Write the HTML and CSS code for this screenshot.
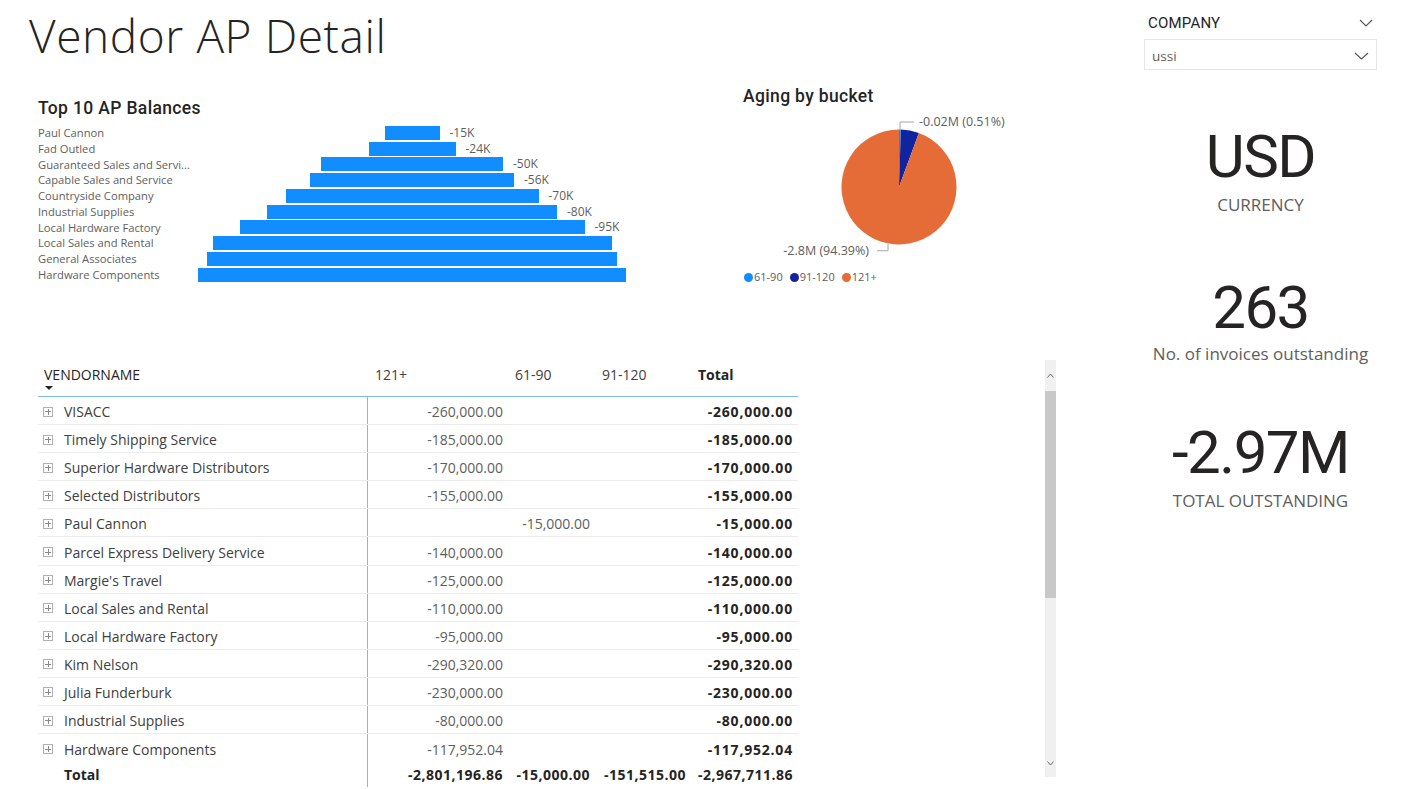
FILE: index.html
```html
<!DOCTYPE html>
<html lang="en">
<head>
<meta charset="utf-8">
<title>Vendor AP Detail</title>
<link rel="stylesheet" href="styles.css">
</head>
<body>
<div class="page">
  <main class="main">
    <h1 class="title">Vendor AP Detail</h1>
    <section class="charts">
      <div class="funnel">
        <h2 class="visual-title">Top 10 AP Balances</h2>
        <div class="funnel-rows">
          <div class="f-row"><span class="f-label">Paul Cannon</span><div class="f-track"><div class="f-bar" style="width:55px"><span class="f-val">-15K</span></div></div></div>
          <div class="f-row"><span class="f-label">Fad Outled</span><div class="f-track"><div class="f-bar" style="width:87px"><span class="f-val">-24K</span></div></div></div>
          <div class="f-row"><span class="f-label">Guaranteed Sales and Servi...</span><div class="f-track"><div class="f-bar" style="width:182px"><span class="f-val">-50K</span></div></div></div>
          <div class="f-row"><span class="f-label">Capable Sales and Service</span><div class="f-track"><div class="f-bar" style="width:204px"><span class="f-val">-56K</span></div></div></div>
          <div class="f-row"><span class="f-label">Countryside Company</span><div class="f-track"><div class="f-bar" style="width:253px"><span class="f-val">-70K</span></div></div></div>
          <div class="f-row"><span class="f-label">Industrial Supplies</span><div class="f-track"><div class="f-bar" style="width:290px"><span class="f-val">-80K</span></div></div></div>
          <div class="f-row"><span class="f-label">Local Hardware Factory</span><div class="f-track"><div class="f-bar" style="width:345px"><span class="f-val">-95K</span></div></div></div>
          <div class="f-row"><span class="f-label">Local Sales and Rental</span><div class="f-track"><div class="f-bar" style="width:399px"></div></div></div>
          <div class="f-row"><span class="f-label">General Associates</span><div class="f-track"><div class="f-bar" style="width:410px"></div></div></div>
          <div class="f-row"><span class="f-label">Hardware Components</span><div class="f-track"><div class="f-bar" style="width:428px"></div></div></div>
        </div>
      </div>
      <div class="pie">
        <h2 class="visual-title">Aging by bucket</h2>
        <svg class="pie-svg" viewBox="0 0 280 152" xmlns="http://www.w3.org/2000/svg">
          <path d="M156 77 L156 19.5 A57.5 57.5 0 0 1 157.85 19.53 Z" fill="#118DFF"/>
          <path d="M156 77 L157.85 19.53 A57.5 57.5 0 0 1 175.88 23.04 Z" fill="#12239E"/>
          <path d="M156 77 L175.88 23.04 A57.5 57.5 0 1 1 156 19.5 Z" fill="#E66C37"/>
          <path d="M157 19.5 V12 H171" fill="none" stroke="#a6a6a6" stroke-width="1"/>
          <path d="M134 140.7 H145 V133.5" fill="none" stroke="#a6a6a6" stroke-width="1"/>
          <text class="pie-lbl" x="176" y="16">-0.02M (0.51%)</text>
          <text class="pie-lbl" x="126" y="145" text-anchor="end">-2.8M (94.39%)</text>
        </svg>
        <div class="legend">
          <span class="lg-item"><span class="dot d1"></span>61-90</span>
          <span class="lg-item"><span class="dot d2"></span>91-120</span>
          <span class="lg-item"><span class="dot d3"></span>121+</span>
        </div>
      </div>
    </section>
    <section class="matrix">
      <div class="table">
        <div class="m-head">
          <div class="h-cell first">VENDORNAME<div class="sort"></div></div>
          <div class="h-cell">121+</div>
          <div class="h-cell">61-90</div>
          <div class="h-cell">91-120</div>
          <div class="h-cell h-total">Total</div>
        </div>
        <div class="m-row"><div class="cell name"><span class="plus"></span>VISACC</div><div class="cell num">-260,000.00</div><div class="cell num"></div><div class="cell num"></div><div class="cell num tot">-260,000.00</div></div>
        <div class="m-row"><div class="cell name"><span class="plus"></span>Timely Shipping Service</div><div class="cell num">-185,000.00</div><div class="cell num"></div><div class="cell num"></div><div class="cell num tot">-185,000.00</div></div>
        <div class="m-row"><div class="cell name"><span class="plus"></span>Superior Hardware Distributors</div><div class="cell num">-170,000.00</div><div class="cell num"></div><div class="cell num"></div><div class="cell num tot">-170,000.00</div></div>
        <div class="m-row"><div class="cell name"><span class="plus"></span>Selected Distributors</div><div class="cell num">-155,000.00</div><div class="cell num"></div><div class="cell num"></div><div class="cell num tot">-155,000.00</div></div>
        <div class="m-row"><div class="cell name"><span class="plus"></span>Paul Cannon</div><div class="cell num"></div><div class="cell num">-15,000.00</div><div class="cell num"></div><div class="cell num tot">-15,000.00</div></div>
        <div class="m-row"><div class="cell name"><span class="plus"></span>Parcel Express Delivery Service</div><div class="cell num">-140,000.00</div><div class="cell num"></div><div class="cell num"></div><div class="cell num tot">-140,000.00</div></div>
        <div class="m-row"><div class="cell name"><span class="plus"></span>Margie's Travel</div><div class="cell num">-125,000.00</div><div class="cell num"></div><div class="cell num"></div><div class="cell num tot">-125,000.00</div></div>
        <div class="m-row"><div class="cell name"><span class="plus"></span>Local Sales and Rental</div><div class="cell num">-110,000.00</div><div class="cell num"></div><div class="cell num"></div><div class="cell num tot">-110,000.00</div></div>
        <div class="m-row"><div class="cell name"><span class="plus"></span>Local Hardware Factory</div><div class="cell num">-95,000.00</div><div class="cell num"></div><div class="cell num"></div><div class="cell num tot">-95,000.00</div></div>
        <div class="m-row"><div class="cell name"><span class="plus"></span>Kim Nelson</div><div class="cell num">-290,320.00</div><div class="cell num"></div><div class="cell num"></div><div class="cell num tot">-290,320.00</div></div>
        <div class="m-row"><div class="cell name"><span class="plus"></span>Julia Funderburk</div><div class="cell num">-230,000.00</div><div class="cell num"></div><div class="cell num"></div><div class="cell num tot">-230,000.00</div></div>
        <div class="m-row"><div class="cell name"><span class="plus"></span>Industrial Supplies</div><div class="cell num">-80,000.00</div><div class="cell num"></div><div class="cell num"></div><div class="cell num tot">-80,000.00</div></div>
        <div class="m-row last"><div class="cell name"><span class="plus"></span>Hardware Components</div><div class="cell num">-117,952.04</div><div class="cell num"></div><div class="cell num"></div><div class="cell num tot">-117,952.04</div></div>
        <div class="m-total">
          <div class="cell name">Total</div>
          <div class="cell num tot">-2,801,196.86</div>
          <div class="cell num tot">-15,000.00</div>
          <div class="cell num tot">-151,515.00</div>
          <div class="cell num tot">-2,967,711.86</div>
        </div>
      </div>
      <div class="scrollbar">
        <div class="sb-btn up"><svg width="7" height="5" viewBox="0 0 7 5"><polyline points="0.5,4.5 3.5,1 6.5,4.5" fill="none" stroke="#666" stroke-width="1"/></svg></div>
        <div class="sb-thumb"></div>
        <div class="sb-fill"></div>
        <div class="sb-btn down"><svg width="7" height="5" viewBox="0 0 7 5"><polyline points="0.5,0.5 3.5,4 6.5,0.5" fill="none" stroke="#666" stroke-width="1"/></svg></div>
      </div>
    </section>
  </main>
  <aside class="side">
    <div class="slicer-head">
      <span>COMPANY</span>
      <svg width="14" height="8" viewBox="0 0 14 8"><polyline points="1,1 7,7 13,1" fill="none" stroke="#555" stroke-width="1.1"/></svg>
    </div>
    <div class="slicer-box">
      <span>ussi</span>
      <svg width="15" height="8" viewBox="0 0 15 8"><polyline points="1,1 7.5,7 14,1" fill="none" stroke="#555" stroke-width="1.1"/></svg>
    </div>
    <div class="card c1">
      <div class="card-value">USD</div>
      <div class="card-label">CURRENCY</div>
    </div>
    <div class="card c2">
      <div class="card-value">263</div>
      <div class="card-label lbl-tight">No. of invoices outstanding</div>
    </div>
    <div class="card c3">
      <div class="card-value">-2.97M</div>
      <div class="card-label">TOTAL OUTSTANDING</div>
    </div>
  </aside>
</div>
</body>
</html>
```

FILE: styles.css
```css
* { box-sizing: border-box; }
html, body { margin: 0; padding: 0; }
body {
  width: 1415px;
  height: 789px;
  overflow: hidden;
  background: #fff;
  font-family: "Open Sans", "Segoe UI", sans-serif;
  color: #252423;
}
.page {
  display: grid;
  grid-template-columns: 1144px 233px;
}
.title {
  margin: 12px 0 0 29px;
  font-weight: 300;
  font-size: 46px;
  line-height: 46px;
  letter-spacing: 0.6px;
  color: #252423;
}
.charts {
  display: flex;
  margin-top: 28px;
  padding-left: 38px;
  height: 198px;
}
.funnel {
  width: 705px;
  padding-top: 12px;
}
.visual-title {
  margin: 0;
  font-family: Roboto, sans-serif;
  font-weight: 500;
  font-size: 17.5px;
  line-height: 20px;
  letter-spacing: 0.35px;
  color: #252423;
}
.funnel-rows {
  margin-top: 7px;
  display: grid;
  grid-auto-rows: 15.78px;
}
.f-row {
  display: grid;
  grid-template-columns: 160px 428px;
  align-items: center;
}
.f-label {
  font-size: 11.2px;
  line-height: 15.78px;
  color: #605E5C;
  white-space: nowrap;
}
.f-track {
  display: flex;
  justify-content: center;
  align-items: center;
  height: 100%;
}
.f-bar {
  height: 14px;
  background: #118DFF;
  position: relative;
}
.f-val {
  position: absolute;
  left: calc(100% + 10px);
  top: 50%;
  transform: translateY(-50%);
  font-size: 12px;
  line-height: 14px;
  color: #605E5C;
  white-space: nowrap;
}
.pie-svg {
  display: block;
  margin-top: 4px;
  width: 280px;
  height: 152px;
}
.pie-lbl {
  font-family: "Open Sans", sans-serif;
  font-size: 12.5px;
  fill: #605E5C;
}
.legend {
  display: flex;
  margin: 8px 0 0 1px;
  gap: 7px;
  font-size: 11px;
  line-height: 14px;
  color: #605E5C;
}
.lg-item { display: flex; align-items: center; gap: 1px; }
.dot { width: 9px; height: 9px; border-radius: 50%; }
.d1 { background: #118DFF; }
.d2 { background: #12239E; }
.d3 { background: #E66C37; }

.matrix {
  margin: 76px 0 0 38px;
  width: 1018px;
  height: 427px;
  display: flex;
  justify-content: space-between;
  align-items: flex-start;
}
.table { width: 760px; }
.m-head, .m-row, .m-total {
  display: grid;
  grid-template-columns: 330px 140px 87px 96px 107px;
}
.m-head {
  height: 37px;
  border-bottom: 1px solid #7db9f3;
  font-size: 14px;
  line-height: 20px;
  color: #404040;
}
.h-cell { padding: 5px 0 0 7px; }
.h-cell.first { padding-left: 6px; color: #252423; }
.h-total { font-weight: 700; color: #252423; }
.sort {
  width: 0;
  height: 0;
  border-left: 4.5px solid transparent;
  border-right: 4.5px solid transparent;
  border-top: 4px solid #252423;
  margin: 1px 0 0 1px;
}
.m-row {
  height: 28.1px;
  border-bottom: 1px solid #ececec;
  font-size: 14px;
}
.m-row.last { border-bottom: none; height: 28px; }
.cell {
  display: flex;
  align-items: center;
  padding-top: 2px;
  white-space: nowrap;
}
.name {
  border-right: 1px solid #7db9f3;
  padding-left: 5px;
  gap: 11px;
  color: #404040;
}
.num {
  justify-content: flex-end;
  padding-right: 5px;
  color: #605E5C;
}
.tot {
  font-weight: 700;
  color: #252423;
  letter-spacing: 0.8px;
}
.plus {
  flex: none;
  width: 10px;
  height: 10px;
  border: 1px solid #b0b0b0;
  background:
    linear-gradient(#8a8a8a, #8a8a8a) center / 6px 1px no-repeat,
    linear-gradient(#8a8a8a, #8a8a8a) center / 1px 6px no-repeat;
}
.m-total {
  height: 25px;
  font-size: 14px;
  font-weight: 700;
  color: #252423;
}
.m-total .cell { padding-top: 0; }
.m-total .num { letter-spacing: 0.5px; }
.m-total .name { padding-left: 26px; color: #252423; letter-spacing: 0; }
.scrollbar {
  width: 11px;
  height: 417px;
  background: #f0f0f0;
  display: flex;
  flex-direction: column;
}
.sb-btn {
  display: flex;
  justify-content: center;
  align-items: center;
}
.sb-btn.up { height: 31px; }
.sb-btn.down { height: 28px; }
.sb-thumb { height: 207px; background: #c8c8c8; }
.sb-fill { flex: 1; }

.side { padding-top: 13px; }
.slicer-head {
  display: flex;
  justify-content: space-between;
  align-items: center;
  height: 20px;
  padding: 0 4px;
  font-family: Roboto, sans-serif;
  font-size: 15px;
  letter-spacing: 0.2px;
  color: #252423;
}
.slicer-box {
  margin-top: 6px;
  height: 31px;
  border: 1px solid #e6e6e6;
  display: flex;
  justify-content: space-between;
  align-items: center;
  padding: 2px 7px 0 7px;
  font-size: 13.5px;
  color: #605E5C;
}
.card { text-align: center; }
.card-value {
  font-family: Roboto, sans-serif;
  font-size: 60px;
  line-height: 70px;
  letter-spacing: -1.5px;
  color: #252423;
}
.card-label {
  margin-top: 2px;
  font-size: 17px;
  line-height: 22px;
  color: #605E5C;
}
.card-label.lbl-tight { margin-top: 0; }
.c1 { margin-top: 51.5px; }
.c2 { margin-top: 57px; }
.c3 { margin-top: 53px; }
```
